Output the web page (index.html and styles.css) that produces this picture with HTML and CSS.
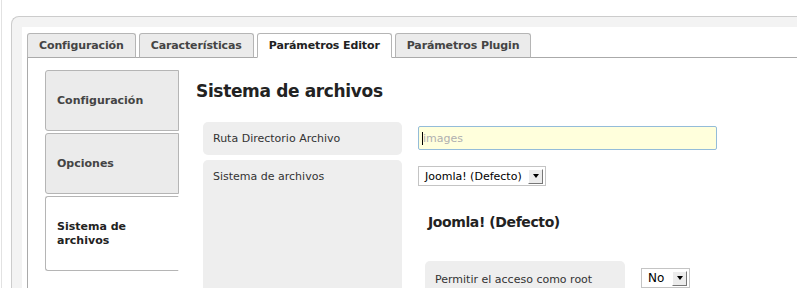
FILE: index.html
```html
<!DOCTYPE html>
<html lang="es">
<head>
  <meta charset="UTF-8">
  <title>Parámetros Editor</title>
  <link rel="stylesheet" href="styles.css">
</head>
<body>
  <div class="page">
    <div class="frame">
      <div class="panel">
        <!-- Top tabs -->
        <ul class="tabs">
          <li class="tab">Configuración</li>
          <li class="tab">Características</li>
          <li class="tab active">Parámetros Editor</li>
          <li class="tab">Parámetros Plugin</li>
        </ul>

        <div class="tab-body">
          <!-- Side tabs -->
          <ul class="vtabs">
            <li class="vtab">Configuración</li>
            <li class="vtab">Opciones</li>
            <li class="vtab active">Sistema de archivos</li>
          </ul>

          <div class="pane">
            <h2>Sistema de archivos</h2>

            <div class="row">
              <label class="label">Ruta Directorio Archivo</label>
              <div class="control">
                <div class="input"><span class="caret"></span><span class="placeholder">images</span></div>
              </div>
            </div>

            <div class="row">
              <label class="label">Sistema de archivos</label>
              <div class="control">
                <div class="select wide"><span>Joomla! (Defecto)</span><span class="arrow"></span></div>
                <h3>Joomla! (Defecto)</h3>
                <div class="row sub">
                  <label class="label">Permitir el acceso como root</label>
                  <div class="control">
                    <div class="select narrow"><span>No</span><span class="arrow"></span></div>
                  </div>
                </div>
              </div>
            </div>
          </div>
        </div>
      </div>
    </div>
  </div>
</body>
</html>
```

FILE: styles.css
```css
* {
  box-sizing: border-box;
}
body {
  margin: 0;
  font-family: "DejaVu Sans", Verdana, sans-serif;
  font-size: 11px;
  color: #333;
  background: #fff;
  overflow: hidden;
}
.page {
  margin-left: 1px;
  border-left: 1px solid #e2e2e2;
  padding: 16px 0 0 9px;
  height: 288px;
  overflow: hidden;
}
.frame {
  height: 100%;
  border: 1px solid #ccc;
  border-right: 0;
  border-bottom: 0;
  border-radius: 8px 0 0 0;
  background: #f3f3f3;
  padding: 10px 0 0 10px;
  overflow: hidden;
}
.panel {
  height: 100%;
  background: #fff;
  padding: 6px 0 0 5px;
  overflow: hidden;
}
.tabs {
  list-style: none;
  margin: 0;
  padding: 0;
  display: flex;
  gap: 3px;
  border-bottom: 1px solid #aaa;
}
.tab {
  border: 1px solid #b5b5b5;
  border-bottom-color: #aaa;
  border-radius: 3px 3px 0 0;
  background: #ebebeb;
  padding: 0 11px;
  margin-bottom: -1px;
  line-height: 23px;
  font-weight: bold;
  letter-spacing: -0.12px;
  color: #444;
}
.tab.active {
  background: #fff;
  border-bottom-color: #fff;
  color: #222;
}
.tab-body {
  height: 100%;
  border-left: 1px solid #aaa;
  display: flex;
  align-items: flex-start;
  padding: 12px 0 0 17px;
}
.vtabs {
  list-style: none;
  margin: 0;
  padding: 0;
  width: 134px;
  flex: none;
  display: flex;
  flex-direction: column;
  gap: 2px;
}
.vtab {
  border: 1px solid #b5b5b5;
  border-radius: 3px 0 0 3px;
  background: #ebebeb;
  padding: 23px 11px 22px;
  line-height: 14px;
  font-weight: bold;
  color: #444;
}
.vtab.active {
  background: #fff;
  border-right-color: #fff;
  color: #222;
}
.pane {
  flex: 1;
  margin-left: 17px;
}
.pane h2 {
  margin: 10px 0 20px;
  font-size: 17px;
  line-height: 22px;
  letter-spacing: -0.35px;
  color: #222;
}
.row {
  display: flex;
  margin: 0 0 5px 7px;
}
.label {
  width: 199px;
  flex: none;
  background: #eee;
  border-radius: 5px;
  padding: 10px;
  line-height: 13px;
  color: #333;
}
.control {
  margin-left: 16px;
  padding-top: 4px;
}
.input {
  width: 299px;
  height: 24px;
  display: flex;
  align-items: center;
  padding-left: 3px;
  border: 1px solid #94bcd9;
  border-radius: 2px;
  background: #ffffdc;
  color: #b0b0b0;
}
.caret {
  width: 1px;
  height: 13px;
  background: #000;
}
.select {
  display: flex;
  align-items: center;
  justify-content: space-between;
  height: 20px;
  margin-top: 2px;
  padding: 0 2px 0 6px;
  border: 1px solid #c4c4c4;
  background: #fff;
  color: #000;
}
.select.wide {
  width: 128px;
}
.select.narrow {
  width: 49px;
  font-size: 12px;
}
.arrow {
  width: 15px;
  height: 15px;
  display: flex;
  align-items: center;
  justify-content: center;
  background: #ececec;
  border: 1px solid;
  border-color: #fff #777 #777 #fff;
}
.arrow::after {
  content: "";
  border-left: 3px solid transparent;
  border-right: 3px solid transparent;
  border-top: 4px solid #000;
}
.control h3 {
  margin: 28px 0 30px 10px;
  font-size: 14px;
  line-height: 17px;
  letter-spacing: -0.4px;
  color: #222;
}
.sub .label {
  width: 200px;
  padding-top: 12px;
}
.sub .control {
  padding-top: 5px;
}
```
